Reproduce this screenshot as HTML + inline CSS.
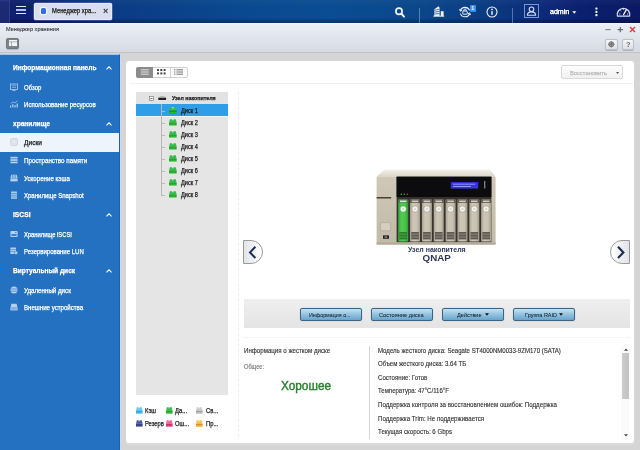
<!DOCTYPE html>
<html lang="ru"><head><meta charset="utf-8"><title>Менеджер хранения</title>
<style>
*{box-sizing:border-box;margin:0;padding:0}
html,body{width:640px;height:450px;overflow:hidden;background:#d5d5d5}
body{position:relative;font-family:"Liberation Sans",sans-serif;font-size:7px;color:#222}
.abs,#root *{position:absolute}
#root{left:0;top:0;width:640px;height:450px;filter:blur(.5px)}
#bg{left:-10px;top:-10px;width:660px;height:470px;background:#d5d5d5}
.t{white-space:nowrap;transform-origin:0 50%;transform:scaleX(.926);line-height:10px;height:10px;-webkit-text-stroke-width:.25px}
svg{overflow:visible}
/* top bar */
#top{left:0;top:-10px;border-top:10px solid #0b2a78;box-sizing:content-box;width:640px;height:23px;background:linear-gradient(rgba(255,255,255,.03) 0,rgba(255,255,255,0) 30%,rgba(0,0,20,0) 78%,rgba(0,0,30,.22) 90%,rgba(0,0,30,.3) 100%),linear-gradient(90deg,#101f6a 0,#0e2270 5.5%,#0b3a83 17%,#0a4389 28%,#0a4a90 40%,#0a4d92 52%,#0a4789 66%,#0b3b82 76%,#0c2a78 85%,#0b1f6e 92%,#0b1964 100%)}
#top .lead{left:0;top:0;width:10px;height:23px;background:linear-gradient(#2a3a86 0,#1c2b74 12%,#1b2970 100%);border-right:1px solid #2c3e8c}
#ham{left:16px;top:5.7px;width:10px;height:9px}
#ham i{left:0;width:10px;height:1.4px;background:#e4eafc}
#tab{left:33.5px;top:2.7px;width:78.7px;height:17.8px;background:#d8deeb;border-radius:2px;box-shadow:inset 0 0 0 .8px #e9eef9,0 0 0 .6px rgba(170,190,235,.5)}
#tab .ic{left:7.4px;top:5.6px;width:5.6px;height:6px;background:#3a6ae0;border-radius:1.5px;box-shadow:0 0 0 1.3px #eef2fb}
#tab .tx{left:18.6px;top:3.4px;font-size:7px;color:#151515;transform:scaleX(.83)}
#tab .cl{left:69.4px;top:3.6px;font-size:9px;font-weight:bold;color:#333;line-height:10px}
.vd{width:1px;background:rgba(150,185,230,.5)}
/* title bar */
#tb{left:-10px;top:22.6px;width:660px;height:30.9px;background:linear-gradient(#f6f8fb 0,#e9eef5 6%,#e4e9f1 35%,#d5dae3 100%);border-bottom:1px solid #bfc2c8}
#tb>*{margin-left:10px}
#tb .tt{left:6px;top:1.4px;font-size:6.2px;color:#303030;-webkit-text-stroke-width:.1px}
.sb{width:13px;height:10.6px;border-radius:2px;background:linear-gradient(#f6f7f9,#dcdfe4);border:1px solid #bcc0c7;box-shadow:0 .6px .8px rgba(0,0,0,.18)}
/* sidebar */
#side{left:0;top:54.2px;width:119.5px;height:396px;background:#2471c2;border-top:1.2px solid #a4c6ee;border-right:1px solid #1f60a6}
#split{left:119.5px;top:54.4px;width:1.6px;height:396px;background:#c6dcf5}
#side .h{margin-top:-.1px;left:13px;font-size:7.3px;font-weight:bold;color:#fff}
#side .it{margin-top:-.4px;margin-left:.6px;left:23.9px;font-size:6.9px;color:#fff;-webkit-text-stroke-width:.25px}
#side .sel{left:0;top:78.2px;width:119px;height:18.2px;background:#edf4fb}
#side .chev{left:105.5px;width:6px;height:4px;margin-top:-.7px}
#side .ico{left:10.4px;width:8px;height:8px;margin-top:-1.8px;opacity:.75}
/* panel */
#panel{left:126px;top:61px;width:508px;height:382.1px;background:#fff;border-radius:3px;box-shadow:0 2px 1px #dcdcdc}

/* top icons */
#top svg{fill:none;stroke:#eef3fc;stroke-width:1.2}
#top .adm{left:549.6px;top:6.6px;font-size:8px;color:#fff;line-height:10px;transform:scaleX(.9);text-shadow:0 0 .5px #fff}
/* panel content */
#vb{left:10px;top:5.6px;width:52px;height:11px;border:1px solid #cfcfcf;border-radius:2px;background:#fff}
#vb .a{left:-1px;top:-1px;width:17px;height:11px;background:#8c8c8c;border-radius:2px 0 0 2px}
#vb .s{top:0;width:1px;height:9px;background:#d4d4d4}
#rest{left:435.2px;top:4.2px;width:61.4px;height:13.8px;border:1px solid #d9d9d9;border-radius:2px;background:linear-gradient(#fdfdfd,#f1f1f1)}
#rest .t{left:9px;top:1.6px;font-size:6.25px;color:#b9b9b9}
#hl{left:4px;top:22px;width:503px;height:1.4px;background:#f2f2f2}
#tree{left:10px;top:30.6px;width:92px;height:303.6px;background:#e5e5e5}
#tree .hd{left:0;top:0;width:92px;height:12.2px;background:#e2e2e2}
#tree .cur{left:0;top:12.2px;width:92px;height:12.3px;background:#2d9ee7;box-shadow:0 1px 0 #eef4f8}
#tree .n{left:36.3px;font-size:5.9px;font-weight:bold;color:#1c1c1c;top:1.5px;transform:scaleX(.895)}
#tree .d{left:44px;font-size:6.6px;color:#1a1a1a;margin-top:.6px}
#tree .vl{left:25.4px;top:12.4px;width:.6px;height:91.6px;background:#b8b8b8}
#tree .hz{left:25.8px;width:3.4px;height:.6px;background:#b8b8b8;margin-top:.6px}
#tree .dk{left:33.3px;width:7.7px;height:6.3px;margin-top:1.7px}
#vdash{left:112px;top:31px;width:0;height:345px;border-left:1px dashed #eeeeee}
.lg{font-size:6.6px;color:#222;transform:scaleX(.88)}
.li{width:6.6px;height:6.4px;margin:.6px 0 0 -.3px}

/* right */
#nas{left:249px;top:108px}
#cap1{left:0;top:183.5px;width:100%}
.cap{left:243px;width:388px;text-align:center}
.cap span{position:static!important;display:inline-block;white-space:nowrap;line-height:10px;transform:scaleX(.926)}
.arr{width:20px;height:24px;margin-top:-.5px;border:1px solid #9a9a9a;background:linear-gradient(90deg,#e2e4e8,#fff)}
#bar{left:117.6px;top:237.8px;width:386.4px;height:28.8px;background:linear-gradient(#efefef,#e4e4e4)}
.btn{margin-left:-.6px;top:9.2px;width:62px;height:12.6px;border:1px solid #3b6587;border-radius:2px;background:linear-gradient(#c6e1f0 0,#97c5e1 45%,#68a4cd 100%);box-shadow:0 0 1px rgba(0,0,0,.35)}
.btn .t{left:0;top:.6px;-webkit-text-stroke-width:.05px;font-size:6.2px;color:#14202c;height:10px;line-height:10px}
#dot{left:117px;top:275.6px;width:387px;height:0;border-top:1px dotted #ececec}
#vsep{left:243px;top:285px;width:1px;height:93px;background:#d6d6d6}
.i1{left:117.5px;font-size:6.9px;color:#2e2e2e;-webkit-text-stroke-width:.12px}
.inf{left:252px;font-size:6.9px;color:#2e2e2e;-webkit-text-stroke-width:.12px}
#sc{left:495.4px;top:284px;width:8px;height:94.6px;background:#fafafa}
#sc .th{left:.2px;top:8.2px;width:7.6px;height:45.4px;background:linear-gradient(90deg,#cdcdcd,#c2c2c2)}
</style></head><body><div id="root"><div id="bg"></div>
<div id="top">
  <div class="lead"></div>
  <div id="ham"><i style="top:0"></i><i style="top:3.55px;background:#b4bff2"></i><i style="top:7.1px"></i></div>
  <div id="tab"><div class="ic"></div><div class="tx t" style="left:18.5px;transform:scaleX(0.832)">Менеджер хра...</div><div class="cl">×</div></div>

  <svg style="left:393.6px;top:6px" width="12" height="12" viewBox="0 0 12 12"><circle cx="5" cy="5.3" r="3.1" stroke-width="1.7"/><path d="M7.4 7.8L10 10.6" stroke-width="2" stroke-linecap="round"/></svg>
  <div class="vd" style="left:418.5px;top:8px;height:15px"></div>
  <svg style="left:433.4px;top:5px" width="12" height="12" viewBox="0 0 12 12"><path d="M1.2 11V4.6L5.4 1.2l1.2 1.6V11z" fill="#eef3fc" stroke="none"/><path d="M1.2 5.4l5.4-1.2M1.2 7.2l5.4-.8M1.2 9l5.4-.4" stroke="#0b4088" stroke-width=".7"/><rect x="7.8" y="6.2" width="2.8" height="4.8" fill="#eef3fc" stroke="none"/><path d="M.4 11.2h10.8" stroke-width="1"/></svg>
  <svg style="left:459.2px;top:5.7px" width="12" height="12" viewBox="0 0 12 12"><path d="M10.6 4.4A5 5 0 0 0 1.3 4.6M1.4 7.6a5 5 0 0 0 9.3 .1" stroke-width="1.1"/><path d="M0.4 3.3l1 1.9 1.8-1M11.6 8.8l-1-1.9-1.8 1" stroke-width="1"/><rect x="3.8" y="5" width="4.4" height="3.2" rx=".5" stroke-width="1"/><path d="M4.8 5V4.2a1.2 1.2 0 0 1 2.4 0V5" stroke-width=".9"/></svg>
  <div style="left:469.6px;top:4.6px;width:6px;height:7.5px;background:#3392f6;border-radius:1px"></div>
  <div style="left:471.2px;top:4.9px;font-size:5.5px;font-weight:bold;color:#fff;line-height:7px">1</div>
  <svg style="left:486px;top:5.7px" width="12" height="12" viewBox="0 0 12 12"><circle cx="6" cy="6" r="5" stroke-width="1.1"/><path d="M6 5.2v3.6" stroke-width="1.5"/><circle cx="6" cy="3.4" r=".85" fill="#eef3fc" stroke="none"/></svg>
  <div class="vd" style="left:512px;top:8px;height:15px"></div>
  <svg style="left:523.5px;top:4px" width="15" height="14" viewBox="0 0 15 14"><rect x=".5" y=".5" width="14" height="13" stroke="#7d93cf" stroke-width="1"/><circle cx="7.5" cy="5.3" r="2.3" stroke-width="1.1" stroke="#d3dbf8"/><path d="M3.4 11.3c0-2.2 1.6-3.4 4.1-3.4s4.1 1.2 4.1 3.4z" stroke-width="1.1" stroke="#d3dbf8"/></svg>
  <div class="adm t" style="left:549.5px;transform:scaleX(0.881)">admin</div>
  <svg style="left:571.8px;top:10.9px" width="4.6" height="3.2" viewBox="0 0 6 4"><path d="M.4 .4h5.2L3 3.6z" fill="#fff" stroke="none"/></svg>
  <svg style="left:595px;top:7.4px" width="3" height="10" viewBox="0 0 3 10"><rect x=".3" y=".4" width="2.2" height="2.2" rx=".7" fill="#eef3fc" stroke="none"/><rect x=".3" y="3.7" width="2.2" height="2.2" rx=".7" fill="#eef3fc" stroke="none"/><rect x=".3" y="7.1" width="2.2" height="2.2" rx=".7" fill="#eef3fc" stroke="none"/></svg>
  <svg style="left:616.2px;top:6.4px" width="15" height="11" viewBox="0 0 15 11" stroke-linejoin="round"><path d="M1.4 10.2A6.3 6.3 0 1 1 13.6 10.2z" stroke-width="1.3" stroke="#d9defa"/><path d="M7.5 8.6L10.4 3.6" stroke-width="1.3" stroke-linecap="round"/><path d="M3 8h1.3M4.3 4.4l.9 .9M7.5 2.6v1.2M11 8h1.3" stroke-width=".8"/></svg>
</div>
<div id="tb"><div class="tt t" style="left:5.8px;transform:scaleX(0.901)">Менеджер хранения</div>
  <div class="sb" style="left:6px;top:15.4px;background:#7f8289;border-color:#74777d;height:11px;width:13.4px"></div>
  <div class="sb" style="left:604.5px;top:16.6px"></div>
  <div class="sb" style="left:622.4px;top:16.6px;width:11.4px"></div>
  <svg style="left:603px;top:3px" width="34" height="8" viewBox="0 0 34 8"><path d="M2.4 3.6h5.2" stroke="#8a8a8a" stroke-width="1.2"/><path d="M14.6 3.6h5.4M17.3 .9v5.4" stroke="#6a6a6a" stroke-width="1.2"/><path d="M27 1.1l5 5M32 1.1l-5 5" stroke="#de3c3c" stroke-width="1.4"/></svg>
  <svg style="left:8.5px;top:17.5px" width="8" height="6" viewBox="0 0 8 6"><rect x="0" y="0" width="8" height="1.6" fill="#f2f3f5"/><rect x="0" y="2.2" width="2.4" height="3.8" fill="#f2f3f5"/><rect x="3" y="2.2" width="5" height="3.8" fill="#f2f3f5"/></svg>
  <svg style="left:607.6px;top:18.6px" width="6.6" height="6.6" viewBox="0 0 7 7"><circle cx="3.5" cy="3.5" r="2.7" fill="#9a9a9a"/><path d="M3.5 .2v6.6M.2 3.5h6.6" stroke="#6a6a6a" stroke-width=".8"/><circle cx="3.5" cy="3.5" r="2.7" fill="none" stroke="#6a6a6a" stroke-width=".8"/></svg>
  <div style="left:626px;top:17px;font-size:7.6px;font-weight:bold;color:#6c6c6c;line-height:10px">?</div>
</div>
<div id="side">
  <div class="sel"></div>
  <svg class="chev" style="top:11.8px" viewBox="0 0 6 4"><path d="M.5 3.4L3 .9l2.5 2.5" fill="none" stroke="#fff" stroke-width="1.1"/></svg>
<svg class="chev" style="top:67.8px" viewBox="0 0 6 4"><path d="M.5 3.4L3 .9l2.5 2.5" fill="none" stroke="#fff" stroke-width="1.1"/></svg>
<svg class="chev" style="top:158.8px" viewBox="0 0 6 4"><path d="M.5 3.4L3 .9l2.5 2.5" fill="none" stroke="#fff" stroke-width="1.1"/></svg>
<svg class="chev" style="top:214.8px" viewBox="0 0 6 4"><path d="M.5 3.4L3 .9l2.5 2.5" fill="none" stroke="#fff" stroke-width="1.1"/></svg>
<svg class="ico" style="top:29.2px" viewBox="0 0 8 8"><rect x=".5" y="1" width="7" height="5.4" fill="none" stroke="#e6effa" stroke-width=".8"/><path d="M2 2.8h4M2 4.4h4" stroke="#e6effa" stroke-width=".6"/><path d="M2.4 7.6h3.2" stroke="#e6effa" stroke-width=".8"/></svg>
<svg class="ico" style="top:46.7px" viewBox="0 0 8 8"><path d="M.6 7.6V5.4M2.8 7.6V4.2M5 7.6V5M7.2 7.6V3.4" stroke="#e6effa" stroke-width="1.2"/><path d="M.6 3.6L3 1.8l2 1.2L7.4.6" stroke="#e6effa" stroke-width=".7" fill="none"/></svg>
<svg class="ico" style="top:84.7px" viewBox="0 0 8 8"><rect x=".6" y=".6" width="6.8" height="6.8" rx="1" fill="#dfe3e8" stroke="#b8bec6" stroke-width=".7"/><circle cx="4" cy="3.6" r="1.6" fill="#eef0f3" stroke="#c4c9d0" stroke-width=".5"/></svg>
<svg class="ico" style="top:102.7px" viewBox="0 0 8 8"><rect x=".4" y=".8" width="7.2" height="1.7" fill="#e6effa"/><rect x=".4" y="3.2" width="7.2" height="1.7" fill="#e6effa"/><rect x=".4" y="5.6" width="7.2" height="1.7" fill="#e6effa"/></svg>
<svg class="ico" style="top:120.7px" viewBox="0 0 8 8"><path d="M1.2 .8h5.6l.8 3.6H.4z" fill="#e6effa"/><rect x=".4" y="4.8" width="7.2" height="2.6" fill="#e6effa"/><path d="M2.4 1v3.2M4 1v3.2M5.6 1v3.2" stroke="#2270c3" stroke-width=".5"/></svg>
<svg class="ico" style="top:137.4px" viewBox="0 0 8 8"><rect x="1" y=".4" width="6" height="7.4" rx=".6" fill="#e6effa"/><path d="M1 2.4h6M1 4.2h6M1 6h6" stroke="#2270c3" stroke-width=".6"/></svg>
<svg class="ico" style="top:176.2px" viewBox="0 0 8 8"><rect x=".4" y="1" width="7.2" height="6" rx="1" fill="#e6effa"/><rect x="1.4" y="4.2" width="5.2" height="1.6" fill="#2270c3"/><circle cx="5.8" cy="2.6" r=".6" fill="#2270c3"/></svg>
<svg class="ico" style="top:193.7px" viewBox="0 0 8 8"><rect x=".4" y=".6" width="5.6" height="6.4" rx=".6" fill="#e6effa"/><path d="M.4 2.6h5.6M.4 4.6h5.6" stroke="#2270c3" stroke-width=".5"/><circle cx="6" cy="5.8" r="1.8" fill="#e6effa" stroke="#2270c3" stroke-width=".5"/></svg>
<svg class="ico" style="top:232.3px" viewBox="0 0 8 8"><ellipse cx="4" cy="4" rx="3.5" ry="3.6" fill="#e6effa"/><path d="M.6 3h6.8M.6 5.2h6.8" stroke="#2270c3" stroke-width=".6"/></svg>
<svg class="ico" style="top:249.8px" viewBox="0 0 8 8"><path d="M1.4 .8h5.2l.8 3.4H.6z" fill="#e6effa"/><rect x=".4" y="4.4" width="7.2" height="3" fill="#e6effa"/><path d="M1.2 5.9h5.6" stroke="#2270c3" stroke-width=".6"/></svg>
<div class="h t" style="top:8px;left:12.8px;transform:scaleX(0.900)">Информационная панель</div>
  <div class="it t" style="top:27.8px;left:23.2px;transform:scaleX(0.874)">Обзор</div>
  <div class="it t" style="top:45px;left:23.2px;transform:scaleX(0.892)">Использование ресурсов</div>
  <div class="h t" style="top:64px;left:12.8px;transform:scaleX(0.904)">хранилище</div>
  <div class="it t" style="top:83px;color:#222;left:23.2px;transform:scaleX(0.956)">Диски</div>
  <div class="it t" style="top:101px;left:23.2px;transform:scaleX(0.907)">Пространство памяти</div>
  <div class="it t" style="top:119px;left:23.2px;transform:scaleX(0.894)">Ускорение кэша</div>
  <div class="it t" style="top:136.5px;left:23.2px;transform:scaleX(0.875)">Хранилище Snapshot</div>
  <div class="h t" style="top:155px;left:12.6px;transform:scaleX(0.918)">iSCSI</div>
  <div class="it t" style="top:174.9px;left:23.2px;transform:scaleX(0.844)">Хранилище iSCSI</div>
  <div class="it t" style="top:192.5px;left:23.2px;transform:scaleX(0.872)">Резервирование LUN</div>
  <div class="h t" style="top:211px;left:12.6px;transform:scaleX(0.900)">Виртуальный диск</div>
  <div class="it t" style="top:230.8px;left:23.2px;transform:scaleX(0.898)">Удаленный диск</div>
  <div class="it t" style="top:248.6px;left:23.2px;transform:scaleX(0.888)">Внешние устройства</div>
</div>
<div id="split"></div>
<div id="panel">
<div id="vb"><div class="a"></div><div class="s" style="left:33px"></div>
<svg style="left:3px;top:1.7px" width="10" height="6" viewBox="0 0 10 6"><path d="M.8 .8h8M.8 3h8M.8 5.2h8" stroke="#fff" stroke-width=".75"/></svg>
<svg style="left:20px;top:1.7px" width="9" height="6" viewBox="0 0 9 6" fill="#4a4a4a"><rect x="0" y="0" width="2" height="2"/><rect x="3.3" y="0" width="2" height="2"/><rect x="6.6" y="0" width="2" height="2"/><rect x="0" y="3.4" width="2" height="2"/><rect x="3.3" y="3.4" width="2" height="2"/><rect x="6.6" y="3.4" width="2" height="2"/></svg>
<svg style="left:37.2px;top:1.7px" width="10" height="6" viewBox="0 0 10 6"><path d="M2.4 .8H9M2.4 3H9M2.4 5.2H9" stroke="#4a4a4a" stroke-width=".8"/><path d="M.2 .8h1.2M.2 3h1.2M.2 5.2h1.2" stroke="#4a4a4a" stroke-width=".9"/></svg>
</div>
<div id="rest"><div class="t" style="left:8.1px;transform:scaleX(0.924)">Восстановить</div><svg style="left:54px;top:5.6px" width="3.2" height="2.4" viewBox="0 0 4 3"><path d="M0 0h4L2 2.6z" fill="#555"/></svg></div>
<div id="hl"></div>
<div id="tree"><div class="hd"></div><div class="cur"></div><div class="vl"></div>
<svg style="left:13.1px;top:4.1px" width="5" height="5" viewBox="0 0 6 6"><rect x=".5" y=".5" width="5" height="5" fill="#fff" stroke="#777" stroke-width=".8"/><path d="M1.6 3h2.8" stroke="#333" stroke-width=".8"/></svg>
<svg style="left:21.8px;top:3px" width="8.4" height="5.6" viewBox="0 0 9 6"><rect x=".3" y="2.6" width="8.4" height="2.8" rx=".5" fill="#222"/><path d="M1.2 2.6l1-1.6h4.6l1 1.6" fill="#bbb"/></svg>
<div class="n t" style="left:36.1px;transform:scaleX(0.897)">Узел накопителя</div>
<div class="hz" style="top:18.5px"></div><svg class="dk" style="top:14.0px" viewBox="0 0 8 7" preserveAspectRatio="none"><path d="M.9 .2h6.2l.8 4H.1z" fill="#35bd4c"/><rect x="3" y="0" width="2" height="1.5" fill="#fff" opacity=".5"/><rect x="0" y="4.1" width="8" height="1.2" fill="#0a7d0a"/><rect x="0" y="5.3" width="8" height="1.7" fill="#22c022"/><rect x="0" y="6.6" width="8" height=".4" fill="#0a7d0a" opacity=".7"/></svg><div class="d t" style="top:14.0px;left:44.6px;transform:scaleX(0.852)">Диск 1</div>
<div class="hz" style="top:30.5px"></div><svg class="dk" style="top:26.0px" viewBox="0 0 8 7" preserveAspectRatio="none"><path d="M.9 .2h6.2l.8 4H.1z" fill="#35bd4c"/><rect x="3" y="0" width="2" height="1.5" fill="#fff" opacity=".5"/><rect x="0" y="4.1" width="8" height="1.2" fill="#0a7d0a"/><rect x="0" y="5.3" width="8" height="1.7" fill="#22c022"/><rect x="0" y="6.6" width="8" height=".4" fill="#0a7d0a" opacity=".7"/></svg><div class="d t" style="top:26.0px;left:44.6px;transform:scaleX(0.852)">Диск 2</div>
<div class="hz" style="top:42.5px"></div><svg class="dk" style="top:38.0px" viewBox="0 0 8 7" preserveAspectRatio="none"><path d="M.9 .2h6.2l.8 4H.1z" fill="#35bd4c"/><rect x="3" y="0" width="2" height="1.5" fill="#fff" opacity=".5"/><rect x="0" y="4.1" width="8" height="1.2" fill="#0a7d0a"/><rect x="0" y="5.3" width="8" height="1.7" fill="#22c022"/><rect x="0" y="6.6" width="8" height=".4" fill="#0a7d0a" opacity=".7"/></svg><div class="d t" style="top:38.0px;left:44.6px;transform:scaleX(0.852)">Диск 3</div>
<div class="hz" style="top:54.5px"></div><svg class="dk" style="top:50.0px" viewBox="0 0 8 7" preserveAspectRatio="none"><path d="M.9 .2h6.2l.8 4H.1z" fill="#35bd4c"/><rect x="3" y="0" width="2" height="1.5" fill="#fff" opacity=".5"/><rect x="0" y="4.1" width="8" height="1.2" fill="#0a7d0a"/><rect x="0" y="5.3" width="8" height="1.7" fill="#22c022"/><rect x="0" y="6.6" width="8" height=".4" fill="#0a7d0a" opacity=".7"/></svg><div class="d t" style="top:50.0px;left:44.6px;transform:scaleX(0.852)">Диск 4</div>
<div class="hz" style="top:66.5px"></div><svg class="dk" style="top:62.0px" viewBox="0 0 8 7" preserveAspectRatio="none"><path d="M.9 .2h6.2l.8 4H.1z" fill="#35bd4c"/><rect x="3" y="0" width="2" height="1.5" fill="#fff" opacity=".5"/><rect x="0" y="4.1" width="8" height="1.2" fill="#0a7d0a"/><rect x="0" y="5.3" width="8" height="1.7" fill="#22c022"/><rect x="0" y="6.6" width="8" height=".4" fill="#0a7d0a" opacity=".7"/></svg><div class="d t" style="top:62.0px;left:44.6px;transform:scaleX(0.852)">Диск 5</div>
<div class="hz" style="top:78.5px"></div><svg class="dk" style="top:74.0px" viewBox="0 0 8 7" preserveAspectRatio="none"><path d="M.9 .2h6.2l.8 4H.1z" fill="#35bd4c"/><rect x="3" y="0" width="2" height="1.5" fill="#fff" opacity=".5"/><rect x="0" y="4.1" width="8" height="1.2" fill="#0a7d0a"/><rect x="0" y="5.3" width="8" height="1.7" fill="#22c022"/><rect x="0" y="6.6" width="8" height=".4" fill="#0a7d0a" opacity=".7"/></svg><div class="d t" style="top:74.0px;left:44.6px;transform:scaleX(0.852)">Диск 6</div>
<div class="hz" style="top:90.5px"></div><svg class="dk" style="top:86.0px" viewBox="0 0 8 7" preserveAspectRatio="none"><path d="M.9 .2h6.2l.8 4H.1z" fill="#35bd4c"/><rect x="3" y="0" width="2" height="1.5" fill="#fff" opacity=".5"/><rect x="0" y="4.1" width="8" height="1.2" fill="#0a7d0a"/><rect x="0" y="5.3" width="8" height="1.7" fill="#22c022"/><rect x="0" y="6.6" width="8" height=".4" fill="#0a7d0a" opacity=".7"/></svg><div class="d t" style="top:86.0px;left:44.6px;transform:scaleX(0.852)">Диск 7</div>
<div class="hz" style="top:102.5px"></div><svg class="dk" style="top:98.0px" viewBox="0 0 8 7" preserveAspectRatio="none"><path d="M.9 .2h6.2l.8 4H.1z" fill="#35bd4c"/><rect x="3" y="0" width="2" height="1.5" fill="#fff" opacity=".5"/><rect x="0" y="4.1" width="8" height="1.2" fill="#0a7d0a"/><rect x="0" y="5.3" width="8" height="1.7" fill="#22c022"/><rect x="0" y="6.6" width="8" height=".4" fill="#0a7d0a" opacity=".7"/></svg><div class="d t" style="top:98.0px;left:44.6px;transform:scaleX(0.852)">Диск 8</div>
</div>
<div id="vdash"></div>
<svg class="li" style="left:10px;top:345px" viewBox="0 0 8 7" preserveAspectRatio="none"><path d="M.9 .2h6.2l.8 4H.1z" fill="#62caf2"/><rect x="3" y="0" width="2" height="1.5" fill="#fff" opacity=".5"/><rect x="0" y="4.1" width="8" height="1.2" fill="#1a8fc6"/><rect x="0" y="5.3" width="8" height="1.7" fill="#3ab9ee"/><rect x="0" y="6.6" width="8" height=".4" fill="#1a8fc6" opacity=".7"/></svg><div class="lg t" style="left:19px;top:344.5px">Кэш</div>
<svg class="li" style="left:40px;top:345px" viewBox="0 0 8 7" preserveAspectRatio="none"><path d="M.9 .2h6.2l.8 4H.1z" fill="#35bd4c"/><rect x="3" y="0" width="2" height="1.5" fill="#fff" opacity=".5"/><rect x="0" y="4.1" width="8" height="1.2" fill="#0a7d0a"/><rect x="0" y="5.3" width="8" height="1.7" fill="#22c022"/><rect x="0" y="6.6" width="8" height=".4" fill="#0a7d0a" opacity=".7"/></svg><div class="lg t" style="left:49px;top:344.5px">Да...</div>
<svg class="li" style="left:70.5px;top:345px" viewBox="0 0 8 7" preserveAspectRatio="none"><path d="M.9 .2h6.2l.8 4H.1z" fill="#cdcdcd"/><rect x="3" y="0" width="2" height="1.5" fill="#fff" opacity=".5"/><rect x="0" y="4.1" width="8" height="1.2" fill="#8c8c8c"/><rect x="0" y="5.3" width="8" height="1.7" fill="#bdbdbd"/><rect x="0" y="6.6" width="8" height=".4" fill="#8c8c8c" opacity=".7"/></svg><div class="lg t" style="left:80px;top:344.5px">Св...</div>
<svg class="li" style="left:10px;top:358.5px" viewBox="0 0 8 7" preserveAspectRatio="none"><path d="M.9 .2h6.2l.8 4H.1z" fill="#4a5aa2"/><rect x="3" y="0" width="2" height="1.5" fill="#fff" opacity=".5"/><rect x="0" y="4.1" width="8" height="1.2" fill="#18256a"/><rect x="0" y="5.3" width="8" height="1.7" fill="#33438e"/><rect x="0" y="6.6" width="8" height=".4" fill="#18256a" opacity=".7"/></svg><div class="lg t" style="left:19px;top:358.0px">Резерв</div>
<svg class="li" style="left:40px;top:358.5px" viewBox="0 0 8 7" preserveAspectRatio="none"><path d="M.9 .2h6.2l.8 4H.1z" fill="#f2669e"/><rect x="3" y="0" width="2" height="1.5" fill="#fff" opacity=".5"/><rect x="0" y="4.1" width="8" height="1.2" fill="#b40e4c"/><rect x="0" y="5.3" width="8" height="1.7" fill="#ea3078"/><rect x="0" y="6.6" width="8" height=".4" fill="#b40e4c" opacity=".7"/></svg><div class="lg t" style="left:49px;top:358.0px">Ош...</div>
<svg class="li" style="left:70.5px;top:358.5px" viewBox="0 0 8 7" preserveAspectRatio="none"><path d="M.9 .2h6.2l.8 4H.1z" fill="#f9c456"/><rect x="3" y="0" width="2" height="1.5" fill="#fff" opacity=".5"/><rect x="0" y="4.1" width="8" height="1.2" fill="#cc7806"/><rect x="0" y="5.3" width="8" height="1.7" fill="#f6a828"/><rect x="0" y="6.6" width="8" height=".4" fill="#cc7806" opacity=".7"/></svg><div class="lg t" style="left:80px;top:358.0px">Пр...</div>
<svg id="nas" width="123" height="78" viewBox="375 169 123 78">
<defs><linearGradient id="gb" x1="0" y1="0" x2="0" y2="1"><stop offset="0" stop-color="#cfc7b7"/><stop offset="1" stop-color="#c2baa9"/></linearGradient>
<linearGradient id="gt" x1="0" y1="0" x2="0" y2="1"><stop offset="0" stop-color="#f3f1ec"/><stop offset="1" stop-color="#dcd5c7"/></linearGradient>
<linearGradient id="gy" x1="0" y1="0" x2="1" y2="0"><stop offset="0" stop-color="#a9a293"/><stop offset=".3" stop-color="#cdc6b7"/><stop offset=".7" stop-color="#c9c2b3"/><stop offset="1" stop-color="#a39c8d"/></linearGradient>
<linearGradient id="gg" x1="0" y1="0" x2="1" y2="0"><stop offset="0" stop-color="#36a636"/><stop offset=".3" stop-color="#50ca50"/><stop offset=".7" stop-color="#4ac44a"/><stop offset="1" stop-color="#329e32"/></linearGradient></defs>
<path d="M384.5 169.6h105.5l5.6 7H376.6z" fill="url(#gt)"/>
<rect x="376.6" y="176.4" width="119" height="68.2" rx="1" fill="url(#gb)"/>
<rect x="376.6" y="242.4" width="119" height="2.2" fill="#b3ab9a"/>
<rect x="396.6" y="176.7" width="94.8" height="65.4" fill="#37342f"/>
<rect x="396.6" y="176.7" width="94.8" height="20.4" fill="#0c0c0f"/>
<rect x="450.8" y="182.1" width="27.4" height="6.5" fill="#3632ea"/>
<path d="M453 184.2h22M453 186.5h18" stroke="#8b98ff" stroke-width="1"/>
<rect x="484" y="181" width="1.4" height="7.4" fill="#7c7c7c"/>
<circle cx="401.3" cy="194.2" r=".7" fill="#35c060"/><circle cx="404.3" cy="194.2" r=".7" fill="#35c060"/><circle cx="407.3" cy="194.2" r=".7" fill="#c05030"/>
<rect x="376.6" y="197" width="14.6" height="1.5" fill="#4a3f2c"/>
<rect x="380.4" y="222.6" width="10.2" height="8.2" rx=".8" fill="#d6cfc1" stroke="#a8a08e" stroke-width=".6"/>
<rect x="383" y="235.4" width="6" height="3.4" fill="#222"/><rect x="384.6" y="236.6" width="2.6" height="1" fill="#bbb"/>
<rect x="398.20" y="199.6" width="10" height="41.8" rx=".7" fill="url(#gg)"/><rect x="398.20" y="199.6" width="10" height="3.4" fill="#4a7a4a"/><rect x="399.90" y="200.5" width="6.6" height="1.7" fill="#d6ecd6"/><circle cx="403.20" cy="209" r="3.1" fill="#eefcee" stroke="#3a9a3a" stroke-width=".45"/><circle cx="403.20" cy="209" r="1.3" fill="#57b857" opacity=".3"/><rect x="399.40" y="232" width="7.6" height="7.4" fill="#2c7d2c"/><path d="M399.80 234.2h6.8M399.80 237h6.8" stroke="#57b857" stroke-width=".7"/>
<rect x="410.05" y="199.6" width="10" height="41.8" rx=".7" fill="url(#gy)"/><rect x="410.05" y="199.6" width="10" height="3.4" fill="#5e5a50"/><rect x="411.75" y="200.5" width="6.6" height="1.7" fill="#cfcabd"/><circle cx="415.05" cy="209" r="3.1" fill="#f6f4ee" stroke="#8f897c" stroke-width=".45"/><circle cx="415.05" cy="209" r="1.3" fill="#a39d90" opacity=".3"/><rect x="411.25" y="232" width="7.6" height="7.4" fill="#5e5a52"/><path d="M411.65 234.2h6.8M411.65 237h6.8" stroke="#a39d90" stroke-width=".7"/>
<rect x="421.90" y="199.6" width="10" height="41.8" rx=".7" fill="url(#gy)"/><rect x="421.90" y="199.6" width="10" height="3.4" fill="#5e5a50"/><rect x="423.60" y="200.5" width="6.6" height="1.7" fill="#cfcabd"/><circle cx="426.90" cy="209" r="3.1" fill="#f6f4ee" stroke="#8f897c" stroke-width=".45"/><circle cx="426.90" cy="209" r="1.3" fill="#a39d90" opacity=".3"/><rect x="423.10" y="232" width="7.6" height="7.4" fill="#5e5a52"/><path d="M423.50 234.2h6.8M423.50 237h6.8" stroke="#a39d90" stroke-width=".7"/>
<rect x="433.75" y="199.6" width="10" height="41.8" rx=".7" fill="url(#gy)"/><rect x="433.75" y="199.6" width="10" height="3.4" fill="#5e5a50"/><rect x="435.45" y="200.5" width="6.6" height="1.7" fill="#cfcabd"/><circle cx="438.75" cy="209" r="3.1" fill="#f6f4ee" stroke="#8f897c" stroke-width=".45"/><circle cx="438.75" cy="209" r="1.3" fill="#a39d90" opacity=".3"/><rect x="434.95" y="232" width="7.6" height="7.4" fill="#5e5a52"/><path d="M435.35 234.2h6.8M435.35 237h6.8" stroke="#a39d90" stroke-width=".7"/>
<rect x="445.60" y="199.6" width="10" height="41.8" rx=".7" fill="url(#gy)"/><rect x="445.60" y="199.6" width="10" height="3.4" fill="#5e5a50"/><rect x="447.30" y="200.5" width="6.6" height="1.7" fill="#cfcabd"/><circle cx="450.60" cy="209" r="3.1" fill="#f6f4ee" stroke="#8f897c" stroke-width=".45"/><circle cx="450.60" cy="209" r="1.3" fill="#a39d90" opacity=".3"/><rect x="446.80" y="232" width="7.6" height="7.4" fill="#5e5a52"/><path d="M447.20 234.2h6.8M447.20 237h6.8" stroke="#a39d90" stroke-width=".7"/>
<rect x="457.45" y="199.6" width="10" height="41.8" rx=".7" fill="url(#gy)"/><rect x="457.45" y="199.6" width="10" height="3.4" fill="#5e5a50"/><rect x="459.15" y="200.5" width="6.6" height="1.7" fill="#cfcabd"/><circle cx="462.45" cy="209" r="3.1" fill="#f6f4ee" stroke="#8f897c" stroke-width=".45"/><circle cx="462.45" cy="209" r="1.3" fill="#a39d90" opacity=".3"/><rect x="458.65" y="232" width="7.6" height="7.4" fill="#5e5a52"/><path d="M459.05 234.2h6.8M459.05 237h6.8" stroke="#a39d90" stroke-width=".7"/>
<rect x="469.30" y="199.6" width="10" height="41.8" rx=".7" fill="url(#gy)"/><rect x="469.30" y="199.6" width="10" height="3.4" fill="#5e5a50"/><rect x="471.00" y="200.5" width="6.6" height="1.7" fill="#cfcabd"/><circle cx="474.30" cy="209" r="3.1" fill="#f6f4ee" stroke="#8f897c" stroke-width=".45"/><circle cx="474.30" cy="209" r="1.3" fill="#a39d90" opacity=".3"/><rect x="470.50" y="232" width="7.6" height="7.4" fill="#5e5a52"/><path d="M470.90 234.2h6.8M470.90 237h6.8" stroke="#a39d90" stroke-width=".7"/>
<rect x="481.15" y="199.6" width="10" height="41.8" rx=".7" fill="url(#gy)"/><rect x="481.15" y="199.6" width="10" height="3.4" fill="#5e5a50"/><rect x="482.85" y="200.5" width="6.6" height="1.7" fill="#cfcabd"/><circle cx="486.15" cy="209" r="3.1" fill="#f6f4ee" stroke="#8f897c" stroke-width=".45"/><circle cx="486.15" cy="209" r="1.3" fill="#a39d90" opacity=".3"/><rect x="482.35" y="232" width="7.6" height="7.4" fill="#5e5a52"/><path d="M482.75 234.2h6.8M482.75 237h6.8" stroke="#a39d90" stroke-width=".7"/>
</svg>
<div class="arr" style="left:117px;top:179.5px;border-radius:0 12px 12px 0"><svg style="left:4px;top:4.6px" width="9" height="13" viewBox="0 0 9 13"><path d="M7.4 .8L2 6.4l5.4 5.6" fill="none" stroke="#1d2b52" stroke-width="2"/></svg></div>
<div class="arr" style="left:484px;top:179.5px;border-radius:12px 0 0 12px;background:linear-gradient(270deg,#e2e4e8,#fff)"><svg style="left:5.4px;top:4.6px" width="9" height="13" viewBox="0 0 9 13"><path d="M2 .8L7.4 6.4 2 12" fill="none" stroke="#1d2b52" stroke-width="2.1"/></svg></div>
<div class="cap" style="left:250.3px;top:183.8px;width:121px;height:10px;font-size:6.5px;font-weight:bold;color:#2f3758"><span style="transform:scaleX(1.07)">Узел накопителя</span></div>
<div class="cap" style="left:250.6px;top:191.4px;width:121px;height:11px;font-size:9.5px;font-weight:bold;color:#2f3758"><span style="transform:scaleX(1.03)">QNAP</span></div>
<div id="bar"><div class="btn" style="left:57px"><div class="t" style="left:8.1px;transform:scaleX(0.863)">Информация о...</div></div>
<div class="btn" style="left:128px"><div class="t" style="left:7.1px;transform:scaleX(0.909)">Состояние диска</div></div>
<div class="btn" style="left:199px"><div class="t" style="left:13.6px;transform:scaleX(0.904)">Действие</div><svg style="left:42.4px;top:3.8px" width="4" height="3.2" viewBox="0 0 5 4"><path d="M0 .3h5L2.5 3.6z" fill="#111"/></svg></div>
<div class="btn" style="left:270px"><div class="t" style="left:10.5px;transform:scaleX(0.886)">Группа RAID</div><svg style="left:45.2px;top:3.8px" width="4" height="3.2" viewBox="0 0 5 4"><path d="M0 .3h5L2.5 3.6z" fill="#111"/></svg></div>
</div>
<div id="dot"></div><div id="vsep"></div>
<div class="i1 t" style="top:284.5px;left:117.6px;transform:scaleX(0.891)">Информация о жестком диске</div>
<div class="i1 t" style="top:300.5px;color:#707070;font-size:6.5px;left:117.6px;transform:scaleX(0.866)">Общее:</div>
<div class="i1 t" style="top:318px;height:14px;line-height:14px;font-size:12.9px;color:#2b8230;-webkit-text-stroke-width:.45px;left:155.1px;transform:scaleX(0.915)">Хорошее</div>
<div class="inf t" style="top:284.5px;left:251.6px;transform:scaleX(0.880)">Модель жесткого диска: Seagate ST4000NM0033-9ZM170 (SATA)</div>
<div class="inf t" style="top:298.25px;left:251.6px;transform:scaleX(0.880)">Объем жесткого диска: 3.64 ТБ</div>
<div class="inf t" style="top:311.75px;left:251.6px;transform:scaleX(0.885)">Состояние: Готов</div>
<div class="inf t" style="top:325.25px;left:251.6px;transform:scaleX(0.877)">Температура: 47°C/116°F</div>
<div class="inf t" style="top:338.75px;left:251.6px;transform:scaleX(0.895)">Поддержка контроля за восстановлением ошибок: Поддержка</div>
<div class="inf t" style="top:352.5px;left:251.6px;transform:scaleX(0.893)">Поддержка Trim: Не поддерживается</div>
<div class="inf t" style="top:366px;left:251.6px;transform:scaleX(0.885)">Текущая скорость: 6 Gbps</div>
<div id="sc"><div class="th"></div><svg style="left:2.2px;top:3px" width="4" height="3" viewBox="0 0 4 3"><path d="M0 2.8L2 .4l2 2.4z" fill="#444"/></svg><svg style="left:2.2px;top:88.8px" width="4" height="3" viewBox="0 0 4 3"><path d="M0 .2h4L2 2.6z" fill="#444"/></svg></div>

</div>
</div></body></html>
